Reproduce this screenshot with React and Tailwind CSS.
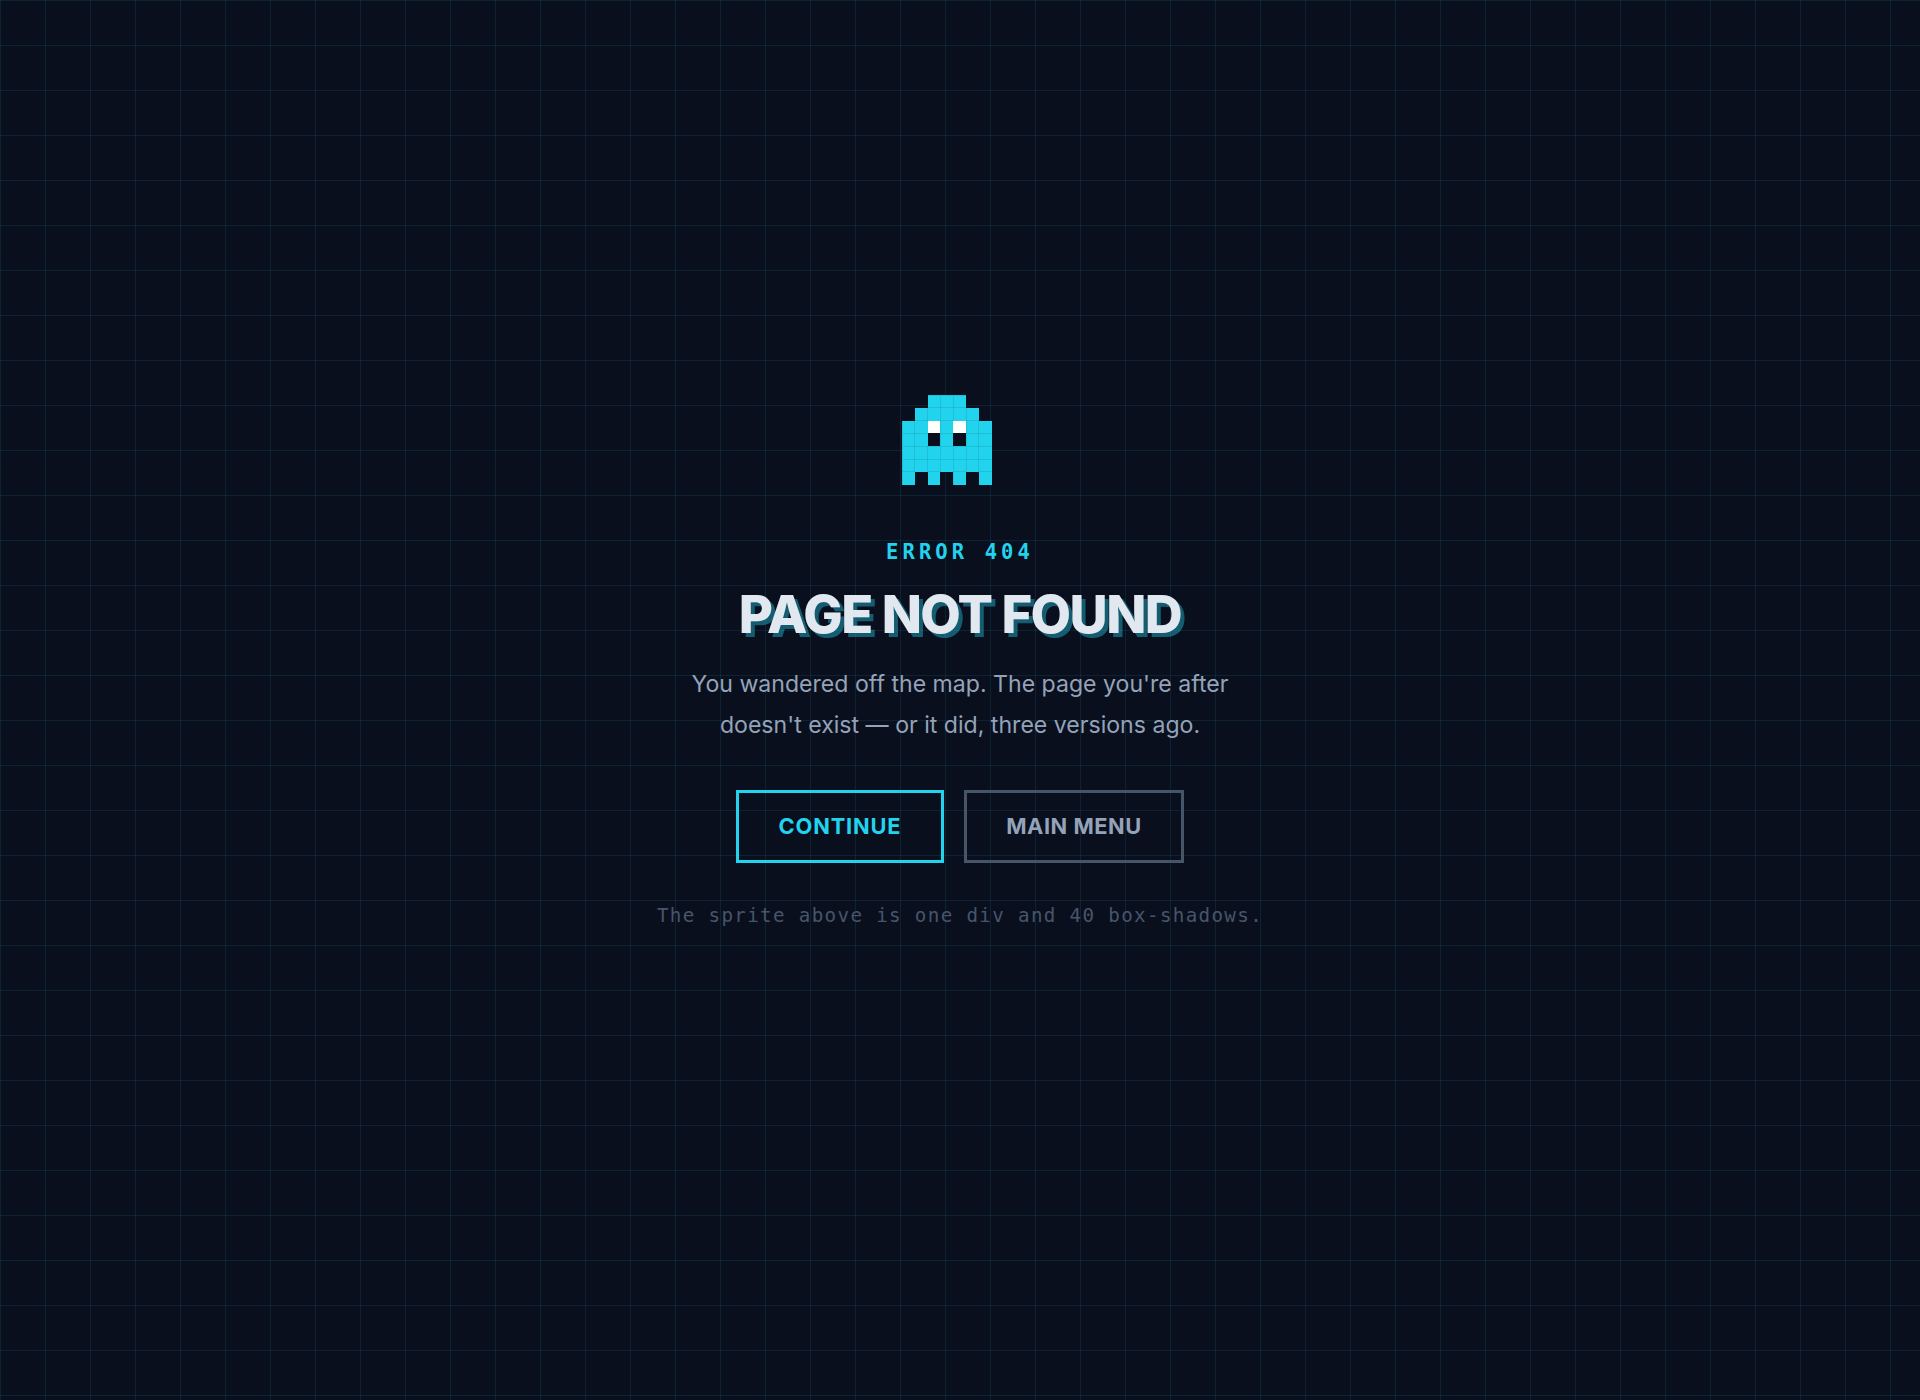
const SPRITE = [
  '..ccc..',
  '.ccccc.',
  'ccwcwcc',
  'cckckcc',
  'ccccccc',
  'ccccccc',
  'c.c.c.c',
]

const COLORS = { c: '#22d3ee', w: '#ffffff', k: '#0a0f1e' }
const PX = 12.8

function Ghost() {
  return (
    <div className="w-[116px] h-[90px] mb-[54.8px]">
      <svg width="90" height="90" viewBox="0 0 90 90" shapeRendering="crispEdges" className="block">
        {SPRITE.map((row, y) =>
          row.split('').map((c, x) =>
            c === '.' ? null : <rect key={`${x}-${y}`} x={x * PX} y={y * PX} width={PX} height={PX} fill={COLORS[c]} />
          )
        )}
        {/* faint seams between the sprite pixels */}
        {SPRITE.map((row, y) =>
          row.split('').map((c, x) =>
            c !== 'c' ? null : (
              <path key={`s-${x}-${y}`} d={`M${x * PX} ${y * PX}h${PX}M${x * PX} ${y * PX}v${PX}`} stroke="#0a0f1e" strokeOpacity="0.1" strokeWidth="1" fill="none" />
            )
          )
        )}
      </svg>
    </div>
  )
}

export default function App() {
  return (
    <div className="min-h-[1400px] bg-[#0a0f1e] bg-[linear-gradient(rgba(34,211,238,0.1)_1px,transparent_1px),linear-gradient(90deg,rgba(34,211,238,0.1)_1px,transparent_1px)] bg-[size:45px_45px] flex flex-col items-center pt-[395px] font-['Inter',sans-serif]">
      <Ghost />
      <p className="font-['DejaVu_Sans_Mono',monospace] font-bold text-[20.5px] leading-[24px] tracking-[0.2em] text-[#22d3ee]">ERROR 404</p>
      <h1 className="mt-[19px] text-[52.5px] leading-[62px] font-extrabold tracking-[-0.03em] text-[#e2e8f0] [text-shadow:4px_4px_0_rgba(34,211,238,0.4)]">PAGE NOT FOUND</h1>
      <p className="mt-[19px] w-[560px] text-center text-[23.1px] leading-[41px] text-[#94a3b8]">
        You wandered off the map. The page you're after doesn't exist — or it did, three versions ago.
      </p>
      <div className="mt-[44px] flex gap-[20px]">
        <button className="h-[73px] w-[208px] border-[3px] border-[#22d3ee] text-[#22d3ee] text-[21.8px] font-bold tracking-[0.04em]">CONTINUE</button>
        <button className="h-[73px] w-[220px] border-[3px] border-[#475569] text-[#94a3b8] text-[21.8px] font-bold tracking-[0.025em]">MAIN MENU</button>
      </div>
      <p className="mt-[41px] font-['DejaVu_Sans_Mono',monospace] text-[19.2px] leading-[24px] tracking-[0.07em] text-[#475569]">The sprite above is one div and 40 box-shadows.</p>
    </div>
  )
}
